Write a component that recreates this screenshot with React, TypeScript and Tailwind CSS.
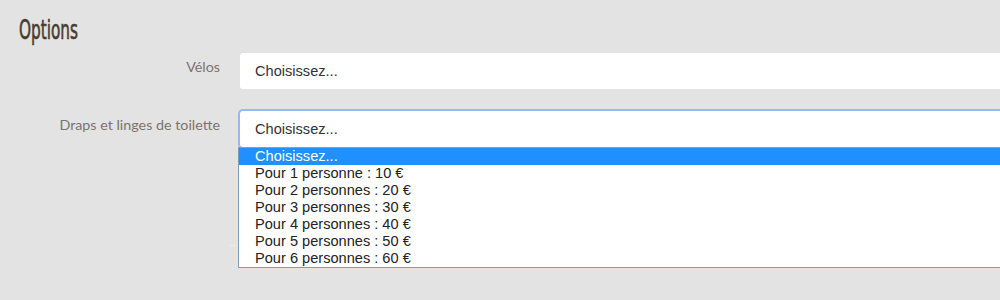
import React from "react";

const options = [
  "Choisissez...",
  "Pour 1 personne : 10 €",
  "Pour 2 personnes : 20 €",
  "Pour 3 personnes : 30 €",
  "Pour 4 personnes : 40 €",
  "Pour 5 personnes : 50 €",
  "Pour 6 personnes : 60 €",
];

const labelFont = { fontFamily: "Lato, 'Open Sans', sans-serif" };
const fieldFont = { fontFamily: "'Liberation Sans', Arial, sans-serif" };

export default function App() {
  return (
    <div className="w-[1000px] h-[300px] overflow-hidden bg-[#e3e3e3]">
      {/* Titre */}
      <div className="pt-[14px] pl-[19px] h-[46px]">
        <span
          className="inline-block origin-left scale-x-[0.63] text-[27px] leading-[32px] text-[#4a3b2f] whitespace-nowrap [-webkit-text-stroke:0.6px_#4a3b2f]"
          style={{ fontFamily: "'DejaVu Sans Condensed', 'DejaVu Sans', sans-serif" }}
        >
          Options
        </span>
      </div>

      {/* Vélos */}
      <div className="mt-[7px] flex gap-5 h-[36px]">
        <div className="w-[220px] shrink-0 text-right pt-[4px] text-[14.3px] leading-[20px] text-[#7b736e]" style={labelFont}>
          Vélos
        </div>
        <div
          className="w-[800px] shrink-0 h-[36px] bg-white rounded-[3px] pl-[15px] text-[14.6px] leading-[36px] text-[#333]"
          style={fieldFont}
        >
          Choisissez...
        </div>
      </div>

      {/* Draps et linges */}
      <div className="mt-[22px] flex gap-5 h-[36px]">
        <div className="w-[220px] shrink-0 text-right pt-[4px] text-[14.3px] leading-[20px] text-[#7b736e]" style={labelFont}>
          Draps et linges de toilette
        </div>
        <div className="relative w-[800px] shrink-0">
          <div
            className="h-[36px] bg-white rounded-[3px] ring-2 ring-[#99b8ec] pl-[15px] text-[14.6px] leading-[36px] text-[#333]"
            style={fieldFont}
          >
            Choisissez...
          </div>
          {/* liste déroulante ouverte */}
          <div
            className="absolute top-full left-[-2px] w-[820px] bg-white border border-[#7f9cb8] border-t-[#9a9a9a] text-[14.6px] leading-[17px] text-[#222]"
            style={fieldFont}
          >
            {options.map((o, i) => (
              <div key={o} className={i === 0 ? "h-[17px] pl-4 bg-[#1e90ff] text-white" : "h-[17px] pl-4"}>
                {o}
              </div>
            ))}
          </div>
        </div>
      </div>

      <div className="mt-[98px] ml-[230px] h-px bg-[#ebebeb]" />
    </div>
  );
}
